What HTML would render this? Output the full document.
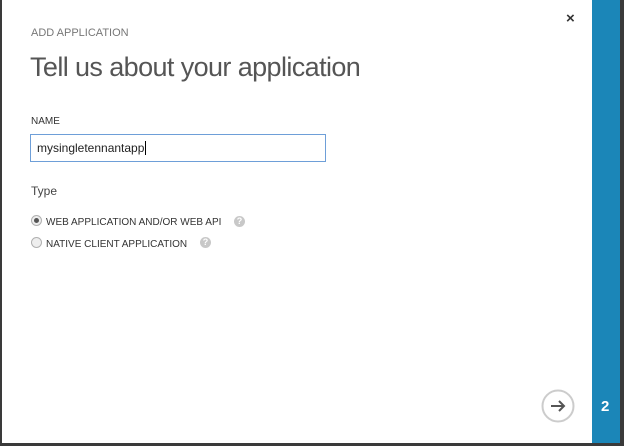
<!DOCTYPE html>
<html><head><style>
html,body{margin:0;padding:0;width:624px;height:446px;overflow:hidden;background:#3a3a3a;font-family:"Segoe UI","Liberation Sans",sans-serif}
.page{position:absolute;left:2px;top:0;width:590px;height:443px;background:#fff}
.side{position:absolute;left:592px;top:0;width:28px;height:443px;background:#1b86b8}
.t{position:absolute;color:#333;white-space:nowrap}
.radio{position:absolute;width:9px;height:9px;border:1px solid #b0b0b0;border-radius:50%;background:#eee}
.q{position:absolute;width:11px;height:11px;border-radius:50%;background:#c8c8c8;color:#fff;font-size:9px;font-weight:bold;text-align:center;line-height:11px}
</style></head><body>
<div class="page"></div>
<div class="side"></div>
<div class="t" style="left:31px;top:27px;font-size:11px;color:#777">ADD APPLICATION</div>
<div class="t" style="left:30px;top:52px;font-size:27px;color:#555;letter-spacing:-0.6px">Tell us about your application</div>
<div class="t" style="left:31px;top:116px;font-size:10px;color:#333">NAME</div>
<div style="position:absolute;left:30px;top:134px;width:296px;height:28px;border:1px solid #6e9fd8;box-sizing:border-box"></div>
<div class="t" style="left:37px;top:141px;font-size:12px;color:#222">mysingletennantapp<span style="border-left:1px solid #000;margin-left:1px"></span></div>
<div class="t" style="left:31px;top:184px;font-size:12px;color:#444">Type</div>
<div class="radio" style="left:31px;top:215px"><div style="width:5px;height:5px;border-radius:50%;background:#555;margin:2px"></div></div>
<div class="t" style="left:46px;top:217px;font-size:10px;color:#333">WEB APPLICATION AND/OR WEB API</div>
<div class="q" style="left:234px;top:216px">?</div>
<div class="radio" style="left:31px;top:237px"></div>
<div class="t" style="left:46px;top:239px;font-size:10px;color:#333">NATIVE CLIENT APPLICATION</div>
<div class="q" style="left:200px;top:237px">?</div>
<div class="t" style="left:566px;top:10px;font-size:15px;font-weight:bold;color:#333">×</div>
<svg style="position:absolute;left:541px;top:389px" width="34" height="34"><circle cx="17" cy="17" r="15.5" fill="none" stroke="#ccc" stroke-width="2"/><path d="M10 17H23M18 12L23 17L18 22" fill="none" stroke="#555" stroke-width="2"/></svg>
<div class="t" style="left:601px;top:398px;font-size:15px;font-weight:bold;color:#fff">2</div>
</body></html>
